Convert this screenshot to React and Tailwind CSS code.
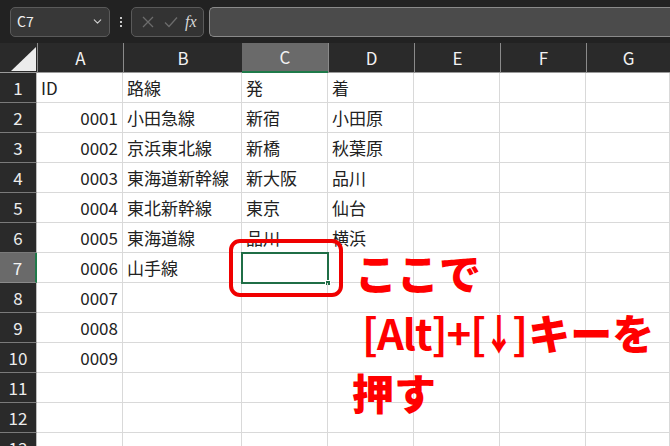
import React from 'react';
import { ChevronDown } from 'lucide-react';

const cols = ['A', 'B', 'C', 'D', 'E', 'F', 'G'];

const rows = [
  ['ID', '路線', '発', '着'],
  ['0001', '小田急線', '新宿', '小田原'],
  ['0002', '京浜東北線', '新橋', '秋葉原'],
  ['0003', '東海道新幹線', '新大阪', '品川'],
  ['0004', '東北新幹線', '東京', '仙台'],
  ['0005', '東海道線', '品川', '横浜'],
  ['0006', '山手線', '', ''],
  ['0007', '', '', ''],
  ['0008', '', '', ''],
  ['0009', '', '', ''],
  ['', '', '', ''],
  ['', '', '', ''],
  ['', '', '', ''],
];

const font = { fontFamily: '"Noto Sans CJK JP", "Noto Sans", sans-serif' };

const TopBar = () => (
  <div className="flex h-[43px] items-center bg-[#222222] pl-[10px]">
    <div className="flex h-[30px] w-[100px] items-center justify-between rounded-[5px] border border-[#5a5a5a] bg-[#383838] pl-[6px] pr-[5px] text-[14px] text-[#f0f0f0]">
      <span>C7</span>
      <ChevronDown size={13} strokeWidth={2} className="text-[#d0d0d0]" />
    </div>
    <div className="flex w-[21px] flex-col items-center gap-[2px]">
      <span className="h-[2px] w-[2px] bg-[#c8c8c8]" />
      <span className="h-[2px] w-[2px] bg-[#c8c8c8]" />
      <span className="h-[2px] w-[2px] bg-[#c8c8c8]" />
    </div>
    <div className="flex h-[30px] w-[73px] items-center rounded-[5px] border border-[#5a5a5a] bg-[#333333] pl-[10px]">
      <svg width="12" height="12" viewBox="0 0 12 12" className="mr-[10px]">
        <path d="M1 1L11 11M11 1L1 11" stroke="#6c6c6c" strokeWidth="1.3" fill="none" />
      </svg>
      <svg width="14" height="12" viewBox="0 0 14 12" className="mr-[7px]">
        <path d="M1 6.5L5 10.5L13 1.5" stroke="#6c6c6c" strokeWidth="1.3" fill="none" />
      </svg>
      <span className="text-[16px] italic text-[#d8d8d8]" style={{ fontFamily: '"Liberation Serif", serif' }}>
        fx
      </span>
    </div>
    <div className="ml-[5px] h-[30px] flex-1 rounded-l-[5px] border border-r-0 border-[#8a8a8a] bg-[#4b4b4b]" />
  </div>
);

const App = () => {
  return (
    <div className="relative h-[446px] w-[670px] overflow-hidden bg-white" style={font}>
      <TopBar />
      <div className="grid grid-cols-[37px_86px_119px_86px_86px_86px_86px_84px] auto-rows-[30px]">
        <div className="relative border-b border-[#9a9a9a] bg-[#2a2a2a]">
          <svg width="25" height="24" viewBox="0 0 25 24" className="absolute left-[11px] top-[4px]">
            <polygon points="25,0 25,24 0,24" fill="#ececec" />
          </svg>
        </div>
        {cols.map((c) => (
          <div
            key={c}
            className={
              c === 'C'
                ? 'flex items-center justify-center border-b-2 border-b-[#1f7a4a] bg-[#6a6a6a] text-[17px] text-[#f2f2f2]'
                : 'flex items-center justify-center border-b border-l border-b-[#9a9a9a] border-l-[#8a8a8a] bg-[#2a2a2a] text-[17px] text-[#f2f2f2]'
            }
          >
            {c}
          </div>
        ))}

        {rows.map((r, i) => {
          const n = i + 1;
          return (
            <React.Fragment key={n}>
              <div
                className={
                  n === 7
                    ? 'flex items-center justify-center border-b border-r-2 border-b-[#8a8a8a] border-r-[#1f7a4a] bg-[#6a6a6a] text-[17px] text-[#f2f2f2]'
                    : 'flex items-center justify-center border-b border-r border-b-[#7a7a7a] border-r-[#bdbdbd] bg-[#2a2a2a] text-[17px] text-[#ececec]'
                }
              >
                {n}
              </div>
              <div className="flex items-center border-b border-r border-[#d9d9d9] px-[4px] text-[17px] text-[#222]">
                {n === 1 ? r[0] : <span className="ml-auto">{r[0]}</span>}
              </div>
              <div className="flex items-center border-b border-r border-[#d9d9d9] px-[4px] text-[17px] text-[#222]">
                {r[1]}
              </div>
              <div className="relative flex items-center border-b border-r border-[#d9d9d9] px-[4px] text-[17px] text-[#222]">
                {r[2]}
                {n === 7 && (
                  <div className="absolute -left-px -top-px h-[32px] w-[88px] border-2 border-[#1f6e46]">
                    <div className="absolute -bottom-[4px] -right-[4px] h-[6px] w-[6px] border border-white bg-[#1f6e46]" />
                  </div>
                )}
              </div>
              <div className="flex items-center border-b border-r border-[#d9d9d9] px-[4px] text-[17px] text-[#222]">
                {r[3]}
              </div>
              <div className="border-b border-r border-[#d9d9d9]" />
              <div className="border-b border-r border-[#d9d9d9]" />
              <div className="border-b border-r border-[#d9d9d9]" />
            </React.Fragment>
          );
        })}
      </div>

      {/* annotation */}
      <div className="absolute left-[229px] top-[239px] h-[58px] w-[114px] rounded-[11px] border-[4px] border-[#f00000]" />
      <div className="absolute left-[352px] top-[250px] flex flex-col gap-[16px] text-[42px] font-black leading-[44px] text-[#ff0000]">
        <div className="ml-[3px]">ここで</div>
        <div className="ml-[10px] flex items-center whitespace-nowrap">
          <span className="font-bold tracking-[-1px]">[Alt]+[</span>
          <span className="inline-flex w-[27px] justify-center">
            <span className="inline-block scale-x-[0.7]">↓</span>
          </span>
          <span className="font-bold">]</span>
          <span>キーを</span>
        </div>
        <div>押す</div>
      </div>
    </div>
  );
};

export default App;
